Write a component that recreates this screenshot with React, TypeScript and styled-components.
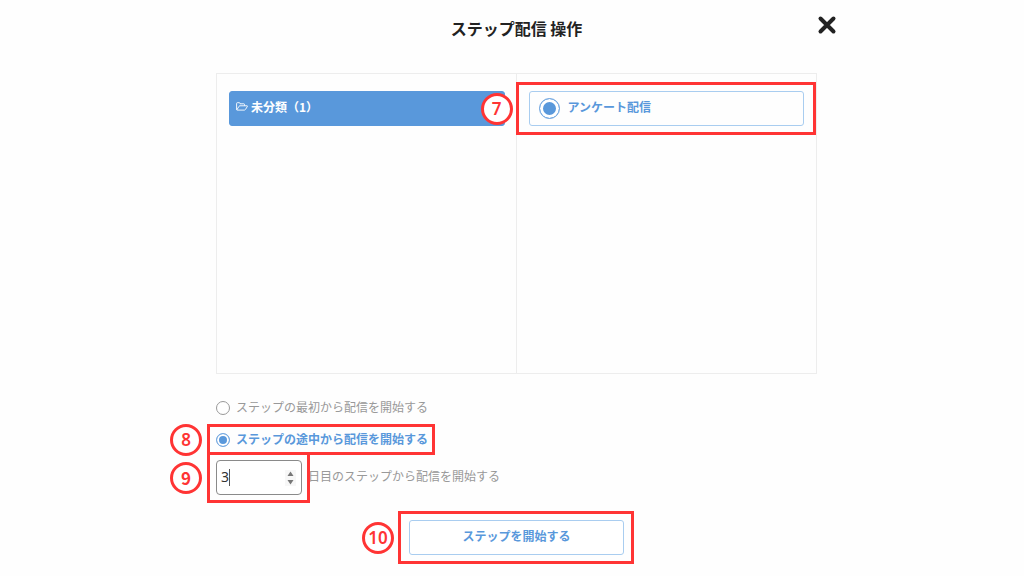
import React, { useState } from 'react';
import styled, { createGlobalStyle, css } from 'styled-components';

const BLUE = '#5998db';
const PALE_BLUE = '#a9cdf0';
const RED = '#ff3434';
const GREY = '#999999';

const GlobalStyle = createGlobalStyle`
  *, *::before, *::after { box-sizing: border-box; }
  body {
    margin: 0;
    background: #fefefe;
    color: #222;
    font-family: 'Noto Sans', 'Noto Sans CJK JP', sans-serif;
    font-size: 12px;
    line-height: 18px;
  }
  button, input { font: inherit; }
`;

const Page = styled.main`
  padding: 0 0 12px 9px;
`;

const Dialog = styled.form`
  width: 100%;
  max-width: 601px;
  margin: 0 auto;
`;

const Header = styled.header`
  position: relative;
  padding: 16px 0 33px;
`;

const Title = styled.h1`
  margin: 0;
  font-family: 'Noto Sans CJK JP', sans-serif;
  font-size: 16px;
  line-height: 24px;
  font-weight: 700;
  text-align: center;
`;

const CloseButton = styled.button`
  position: absolute;
  top: 13px;
  right: -22px;
  width: 24px;
  height: 24px;
  padding: 0;
  border: 0;
  background: none;
  color: #222;
  svg { display: block; }
`;

const Panel = styled.section`
  display: grid;
  grid-template-columns: 1fr 1fr;
  min-height: 301px;
  border: 1px solid #ededed;
`;

const Column = styled.div`
  padding: 17px 12px;
  & + & {
    margin-left: -1px;
    border-left: 1px solid #ededed;
  }
`;

const itemBox = css`
  display: flex;
  align-items: center;
  width: 100%;
  height: 35px;
  border: 1px solid ${PALE_BLUE};
  border-radius: 3px;
  font-family: 'Noto Sans CJK JP', sans-serif;
  font-weight: 700;
  line-height: 18px;
`;

const FolderButton = styled.button`
  ${itemBox}
  gap: 3px;
  padding: 0 6px 4px;
  border-color: ${BLUE};
  background: ${BLUE};
  color: #fff;
`;

const ScenarioLabel = styled.label`
  ${itemBox}
  gap: 8px;
  padding: 0 9px;
  color: ${BLUE};
`;

const LabelText = styled.span`
  padding-bottom: 3px;
`;

const Radio = styled.input<{ $large?: boolean }>`
  appearance: none;
  flex: none;
  width: ${(p) => (p.$large ? 21 : 14)}px;
  height: ${(p) => (p.$large ? 21 : 14)}px;
  margin: 0;
  border: 1px solid ${GREY};
  border-radius: 50%;
  background: #fff;
  &:checked {
    border-color: #75a9e1;
    background: ${BLUE};
    box-shadow: inset 0 0 0 ${(p) => (p.$large ? 3 : 2)}px #fff;
  }
`;

const Callout = styled.div<{ $inset: string }>`
  position: relative;
  &::after {
    content: '';
    position: absolute;
    inset: ${(p) => p.$inset};
    border: 3px solid ${RED};
    pointer-events: none;
  }
`;

const Badge = styled.span<{ $left: number }>`
  position: absolute;
  top: 50%;
  left: ${(p) => p.$left}px;
  z-index: 1;
  display: flex;
  align-items: center;
  justify-content: center;
  width: 32px;
  height: 32px;
  margin-top: -16px;
  border: 3px solid ${RED};
  border-radius: 50%;
  background: #fff;
  color: ${RED};
  font-size: 17px;
  font-weight: 600;
  line-height: 24px;
`;

const Options = styled.div`
  display: flex;
  flex-direction: column;
  align-items: flex-start;
  gap: 12px;
  padding-top: 24px;
`;

const OptionLabel = styled.label<{ $active?: boolean }>`
  display: flex;
  align-items: center;
  gap: 6px;
  height: 20px;
  font-family: 'Noto Sans CJK JP', sans-serif;
  color: ${(p) => (p.$active ? BLUE : GREY)};
  font-weight: ${(p) => (p.$active ? 700 : 400)};
`;

const DayRow = styled.div`
  display: flex;
  align-items: center;
  gap: 6px;
  margin-top: -2px;
  color: ${GREY};
  font-family: 'Noto Sans CJK JP', sans-serif;
`;

const DayField = styled.div`
  display: flex;
  align-items: center;
  position: relative;
  width: 86px;
  height: 35px;
  padding: 0 5px 0 4px;
  border: 1px solid #8a8a8a;
  border-radius: 4px;
  background: #fff;
`;

const DayInput = styled.input`
  appearance: textfield;
  flex: 1;
  min-width: 0;
  padding: 0 0 2px;
  border: 0;
  outline: 0;
  background: none;
  color: #333;
  font-family: 'Noto Sans', sans-serif;
  font-size: 14px;
  &::-webkit-inner-spin-button { appearance: none; }
`;

const Caret = styled.span`
  position: absolute;
  top: 8px;
  left: 12px;
  width: 1px;
  height: 17px;
  background: #555;
`;

const Stepper = styled.div`
  display: flex;
  flex-direction: column;
  background: #f7f7f7;
`;

const StepButton = styled.button`
  width: 11px;
  height: 8px;
  padding: 0;
  border: 0;
  background: none;
  color: #777;
  svg { display: block; }
`;

const Actions = styled.footer`
  display: flex;
  justify-content: center;
  padding-top: 25px;
`;

const SubmitButton = styled.button`
  ${itemBox}
  justify-content: center;
  width: 215px;
  padding: 0 0 3px;
  background: #fff;
  color: ${BLUE};
`;

export default function App() {
  const [start, setStart] = useState('middle');
  const [day, setDay] = useState(3);

  return (
    <>
      <GlobalStyle />
      <Page>
        <Dialog onSubmit={(e) => e.preventDefault()}>
          <Header>
            <Title>ステップ配信 操作</Title>
            <CloseButton type="button" aria-label="閉じる">
              <svg width="24" height="24" viewBox="0 0 24 24" fill="none" stroke="currentColor" strokeWidth="4" strokeLinecap="round">
                <path d="M5.5 5.5 18.5 18.5M18.5 5.5 5.5 18.5" />
              </svg>
            </CloseButton>
          </Header>

          <Panel>
            <Column>
              <FolderButton type="button">
                <svg width="12" height="9" viewBox="0 0 12 9" fill="none" stroke="currentColor" strokeWidth="0.9" strokeLinejoin="round">
                  <path d="M.6 7.6V1.4Q.6.7 1.3.7H3.4Q4 .7 4 1.4V1.8H7.8Q8.5 1.8 8.5 2.5V3.7M.8 7.9 3 4.3Q3.4 3.8 4 3.8H11.2Q11.7 3.9 11.4 4.4L9.5 7.4Q9 8.1 8.3 8.1H1.1Q.6 8.1.6 7.6" />
                </svg>
                <span>未分類（1）</span>
              </FolderButton>
            </Column>
            <Column>
              <Callout $inset="-9px -12px -9px -13px">
                <Badge $left={-48}>7</Badge>
                <ScenarioLabel>
                  <Radio $large type="radio" name="scenario" defaultChecked />
                  <LabelText>アンケート配信</LabelText>
                </ScenarioLabel>
              </Callout>
            </Column>
          </Panel>

          <Options>
            <OptionLabel $active={start === 'first'}>
              <Radio type="radio" name="start" checked={start === 'first'} onChange={() => setStart('first')} />
              <LabelText>ステップの最初から配信を開始する</LabelText>
            </OptionLabel>
            <Callout $inset="-6px -7px -5px -9px">
              <Badge $left={-46}>8</Badge>
              <OptionLabel $active={start === 'middle'}>
                <Radio type="radio" name="start" checked={start === 'middle'} onChange={() => setStart('middle')} />
                <LabelText>ステップの途中から配信を開始する</LabelText>
              </OptionLabel>
            </Callout>
            <DayRow>
              <Callout $inset="-8px -8px -8px -9px">
                <Badge $left={-46}>9</Badge>
                <DayField>
                  <DayInput
                    id="day"
                    type="number"
                    min={1}
                    value={day}
                    onChange={(e) => setDay(Number(e.target.value))}
                  />
                  <Caret />
                  <Stepper>
                    <StepButton type="button" aria-label="増やす" onClick={() => setDay(day + 1)}>
                      <svg width="11" height="8" viewBox="0 0 11 8" fill="currentColor"><path d="M5.5 1.5 8.5 6H2.5Z" /></svg>
                    </StepButton>
                    <StepButton type="button" aria-label="減らす" onClick={() => setDay(Math.max(1, day - 1))}>
                      <svg width="11" height="8" viewBox="0 0 11 8" fill="currentColor"><path d="M5.5 6.5 8.5 2H2.5Z" /></svg>
                    </StepButton>
                  </Stepper>
                </DayField>
              </Callout>
              <LabelText as="label" htmlFor="day">日目のステップから配信を開始する</LabelText>
            </DayRow>
          </Options>

          <Actions>
            <Callout $inset="-9px -10px -9px -11px">
              <Badge $left={-47}>10</Badge>
              <SubmitButton type="submit">ステップを開始する</SubmitButton>
            </Callout>
          </Actions>
        </Dialog>
      </Page>
    </>
  );
}
